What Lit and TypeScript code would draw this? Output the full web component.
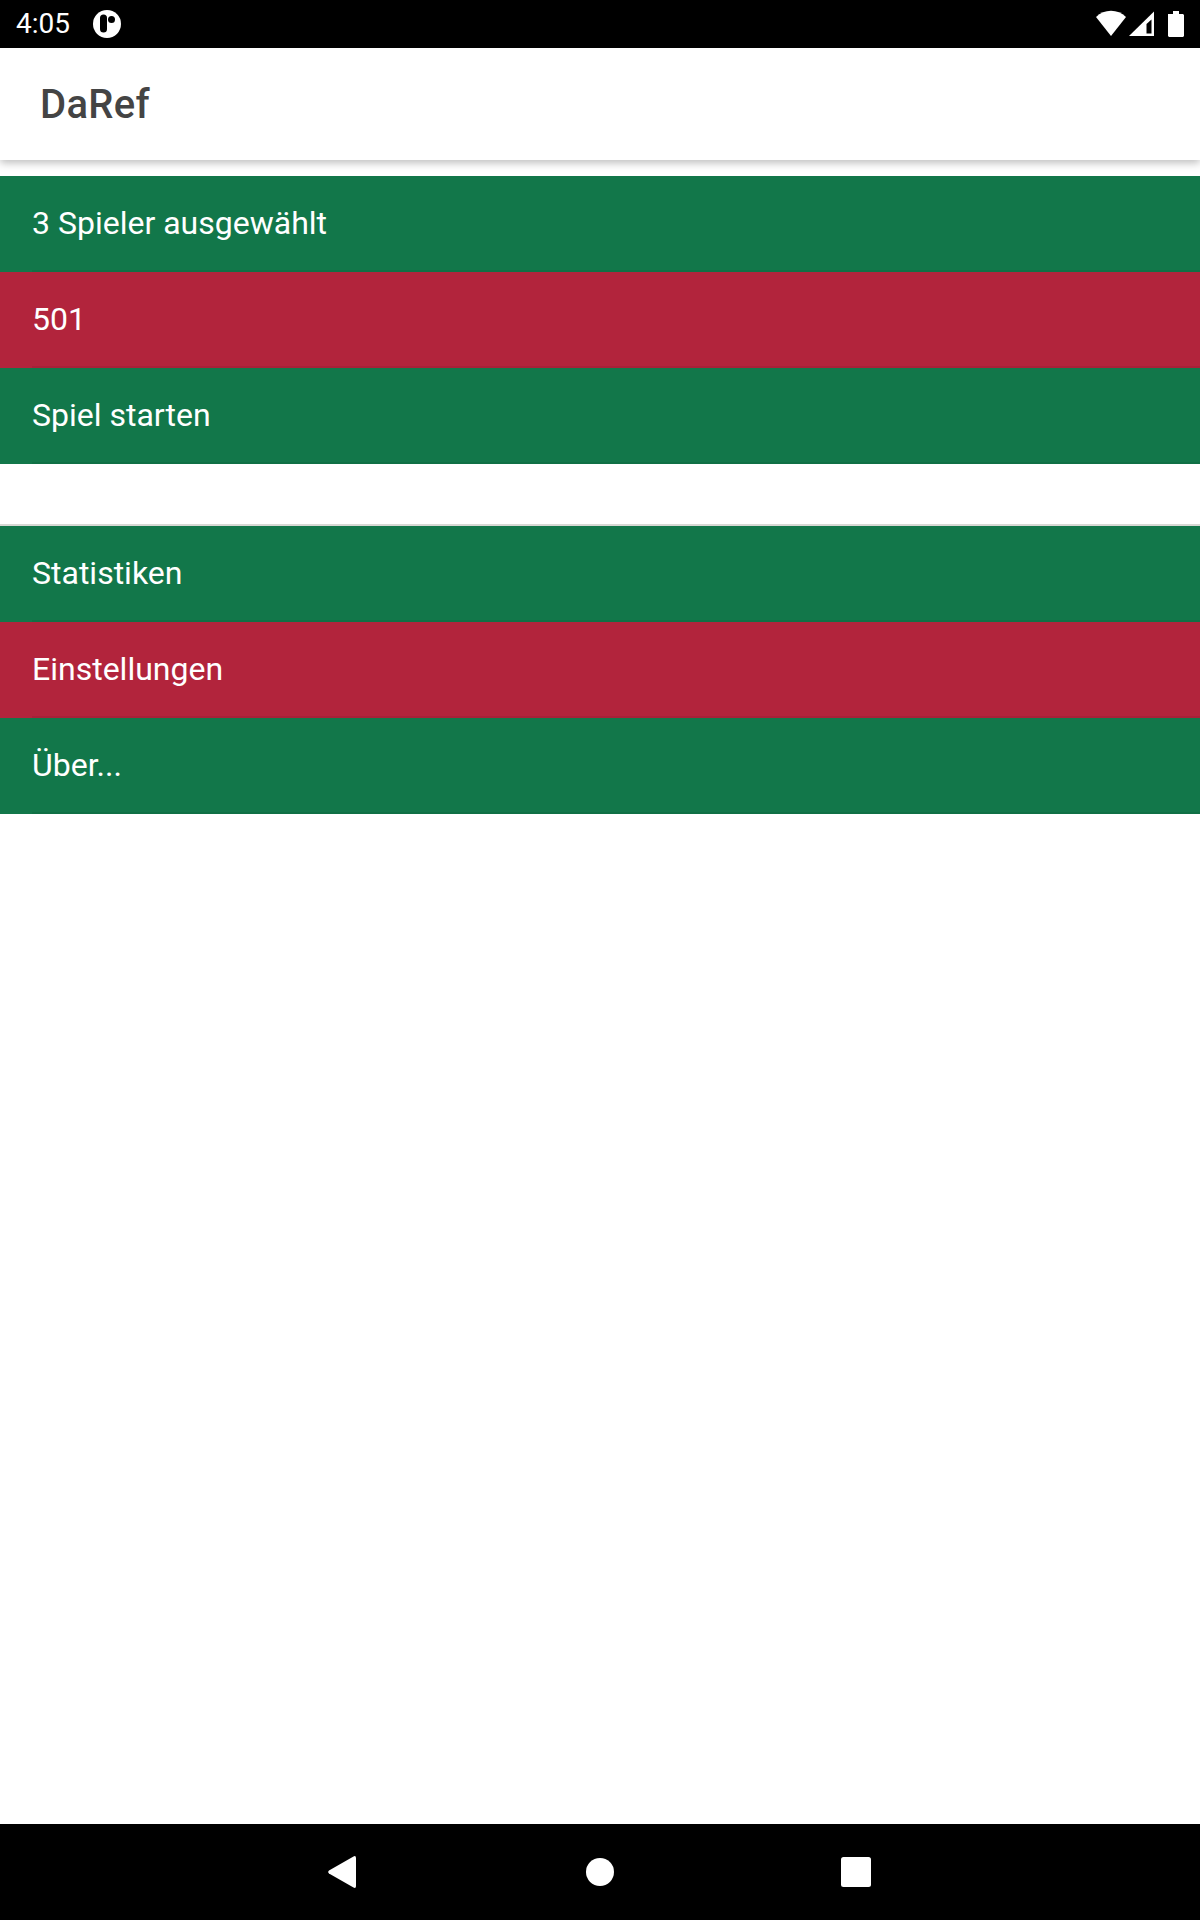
import { LitElement, html, css } from "lit";
import { customElement } from "lit/decorators.js";

@customElement("app-root")
export class AppRoot extends LitElement {
  static styles = css`
    :host { display: flex; flex-direction: column; width: 1200px; height: 1920px; background: #fff; font-family: Roboto, "Liberation Sans", sans-serif; overflow: hidden; }
    .status { height: 48px; background: #000; color: #fff; display: flex; align-items: center; padding-left: 16px; font-size: 28px; flex: none; }
    .status .time { width: 77px; line-height: 48px; }
    .status .spacer { flex: 1; }
    .status svg { display: block; }
    .sysicons { margin-right: 16px; }
    .appbar { height: 112px; flex: none; display: flex; align-items: center; padding-left: 40px; font-size: 40px; font-weight: 500; letter-spacing: 0.3px; color: #444; box-shadow: 0 3px 8px rgba(0,0,0,.26); position: relative; }
    .main { flex: 1; display: flex; flex-direction: column; padding-top: 16px; }
    .group { display: flex; flex-direction: column; }
    .group + .group { margin-top: 60px; border-top: 2px solid #d8d8d4; }
    .row { height: 96px; box-sizing: border-box; display: flex; padding-left: 32px; font-size: 32px; color: #fff; }
    .label { flex: 1; display: flex; align-items: center; border-bottom: 2px solid rgba(0,0,0,.06); }
    .green { background: #12774a; }
    .red { background: #b2243c; }
    .nav { height: 96px; flex: none; background: #000; display: flex; align-items: center; padding-left: 328px; }
    .nav svg { display: block; }
    .home { margin-left: 230px; }
    .recent { margin-left: 227px; }
  `;

  row(text: string, tone: string) {
    return html`<div class="row ${tone}"><div class="label">${text}</div></div>`;
  }

  render() {
    return html`
      <div class="status">
        <span class="time">4:05</span>
        <svg width="28" height="28" viewBox="0 0 28 28">
          <circle cx="14" cy="14" r="14" fill="#fff"/>
          <rect x="7" y="4.5" width="7" height="18" rx="3.5" fill="#000"/>
          <circle cx="18.5" cy="9.5" r="3.5" fill="#000"/>
        </svg>
        <span class="spacer"></span>
        <svg class="sysicons" width="88" height="28" viewBox="0 0 88 28">
          <path d="M0 7 C 8 -1.5 22 -1.5 30 7 L 15 26 Z" fill="#fff"/>
          <path d="M33 26 L 58 1.5 L 58 26 Z" fill="#fff"/>
          <path d="M50.5 14 L 55.5 9.5 L 55.5 23.5 L 50.5 23.5 Z" fill="#000"/>
          <path d="M72 4 L 77 4 L 77 1 L 83 1 L 83 4 L 87 4 L 88 5 L 88 26 L 87 27 L 73 27 L 72 26 Z" fill="#fff"/>
        </svg>
      </div>
      <div class="appbar">DaRef</div>
      <div class="main">
        <div class="group">
          ${this.row("3 Spieler ausgewählt", "green")}
          ${this.row("501", "red")}
          ${this.row("Spiel starten", "green")}
        </div>
        <div class="group">
          ${this.row("Statistiken", "green")}
          ${this.row("Einstellungen", "red")}
          ${this.row("Über...", "green")}
        </div>
      </div>
      <div class="nav">
        <svg width="28" height="32" viewBox="0 0 28 32"><path d="M25.5 0.4 Q28 -0.6 28 2 V30 Q28 32.6 25.5 31.6 L1 17.4 Q-0.6 16 1 14.6 Z" fill="#fff"/></svg>
        <svg class="home" width="28" height="28" viewBox="0 0 28 28"><circle cx="14" cy="14" r="14" fill="#fff"/></svg>
        <svg class="recent" width="30" height="30" viewBox="0 0 30 30"><rect width="30" height="30" rx="2.5" fill="#fff"/></svg>
      </div>
    `;
  }
}
